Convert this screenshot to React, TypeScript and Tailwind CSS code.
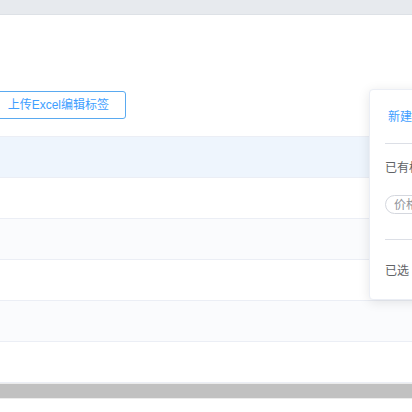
import React from 'react'

const rows = [
  { bg: 'bg-white' },
  { bg: 'bg-[#fafbfd]' },
  { bg: 'bg-white' },
  { bg: 'bg-[#fafbfd]' },
  { bg: 'bg-white' },
]

export default function App() {
  return (
    <div
      className="relative h-[412px] w-[412px] overflow-hidden bg-white text-[12px]"
      style={{ fontFamily: '"Liberation Sans", "Noto Sans CJK SC", sans-serif' }}
    >
      {/* top strip */}
      <div className="h-[15px] border-b border-[#dde1e6] bg-[#e7eaee]" />

      {/* toolbar */}
      <div className="flex h-[121px] items-end pb-[17px]">
        <button className="-ml-[12px] flex h-[28px] w-[138px] items-center justify-end rounded-[3px] border border-[#5aaaf0] bg-white pr-[16px] text-[12px] text-[#409eff]">
          上传Excel编辑标签
        </button>
      </div>

      {/* table */}
      <div className="border-t border-[#ebeef5]">
        <div className="h-[41px] border-b border-[#ebeef5] bg-[#eef5fd]" />
        {rows.map((r, i) => (
          <div
            key={i}
            className={`h-[41px] border-b border-[#ebeef5] ${r.bg}`}
          />
        ))}
      </div>

      {/* horizontal scrollbar */}
      <div className="flex h-[16px] flex-col bg-[#ebebeb] py-[1px]">
        <div className="h-[14px] bg-[#c1c1c1]" />
      </div>

      {/* popover */}
      <div className="absolute left-[369px] top-[89px] h-[211px] w-[220px] rounded-[4px] border border-[#ebeef5] bg-white pl-[15px] pr-[12px] shadow-[0_2px_12px_0_rgba(0,0,0,0.1)]">
        <div className="flex h-[53px] items-center pl-[3px] text-[#409eff]">新建标签</div>
        <div className="border-t border-[#dcdfe6]" />
        <div className="flex h-[48px] items-center text-[#606266]">已有标签</div>
        <div className="mt-[3px] flex">
          <span className="flex h-[19px] items-center rounded-full border border-[#d4d7de] px-[8px] text-[#909399]">
            价格标签
          </span>
        </div>
        <div className="mt-[25px] border-t border-[#dcdfe6]" />
        <div className="flex h-[62px] items-center gap-[6px] text-[#606266]">
          <span>已选</span>
          <span className="text-[#909399]">0</span>
        </div>
      </div>
    </div>
  )
}
